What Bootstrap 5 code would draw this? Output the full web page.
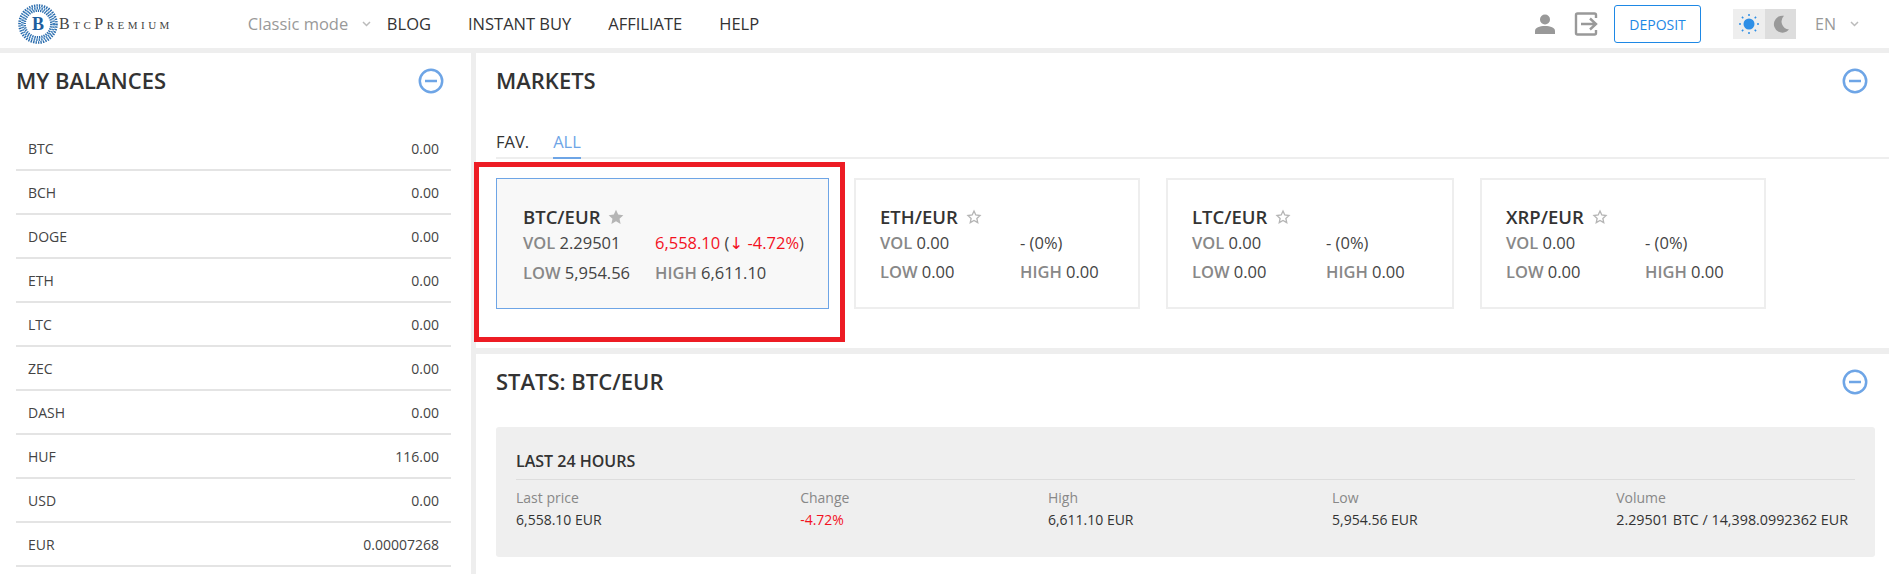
<!DOCTYPE html>
<html lang="en">
<head>
    <meta charset="UTF-8">
    <meta name="viewport" content="width=device-width, initial-scale=1.0">
    <title>BtcPremium</title>
    <link href="https://cdn.jsdelivr.net/npm/bootstrap@5.3.0/dist/css/bootstrap.min.css" rel="stylesheet">
    <style>
        html, body { height: 574px; overflow: hidden; }
        body { font-family: "Open Sans", "Liberation Sans", sans-serif; background: #eee; color: #333; font-size: 14px; }
        .navbar.top-bar { height: 48px; padding: 0 0 0 18px; background: #fff; }
        .logo-name { font-family: "Liberation Serif", serif; font-size: 16px; letter-spacing: 3.5px; color: #444; font-variant: small-caps; margin-left: 1px; }
        .mode-pick { width: 139px; margin-left: 75px; color: #999; font-size: 16.5px; }
        .top-links { gap: 37px; }
        .top-bar .top-links .nav-link { color: #333; font-size: 16.5px; text-decoration: none; padding: 0; }
        .caret-mark { flex: none; }
        .right-tools { margin-right: 30px; }
        .user-mark { margin-right: 18px; }
        .deposit-btn { width: 87px; height: 38px; padding: 0; margin: 0 32px 0 16px; font-size: 14px; font-weight: 500; color: #1e88e5; border: 1px solid #1e88e5; border-radius: 3px; background: #fff; }
        .theme-cell { width: 32px; height: 30px; background: #eee; }
        .theme-cell.is-dark { background: #ddd; width: 31px; }
        .lang-pick { color: #999; font-size: 16px; margin-left: 19px; gap: 14px; }
        .page-body { margin-top: 5px; gap: 5px; height: 521px; }
        .side-panel { width: 471px; flex: none; background: #fff; padding: 0 20px 0 16px; }
        .main-col { gap: 6px; min-width: 0; }
        .panel-head { height: 55px; }
        .side-panel .panel-head { padding-right: 7px; }
        .markets-panel .panel-head { padding-right: 1px; }
        .stats-panel .panel-head { padding-right: 7px; }
        .panel-title { font-size: 22px; font-weight: 600; margin: 0; color: #333; }
        .balance-list { margin-top: 19px; border-radius: 0; }
        .balance-list .list-group-item { height: 44px; padding: 0 12px; font-size: 14px; color: #444; border-color: #e4e4e4; border-width: 0 0 2px; }
        .balance-list .list-group-item:last-child { border-bottom-width: 2px; }
        .markets-panel { height: 295px; background: #fff; padding: 0 20px; }
        .market-tabs { height: 52px; margin-top: -1px; border-bottom: 2px solid #eee; margin-right: -20px; align-items: flex-end; gap: 24px; font-size: 16.5px; }
        .market-tabs span { height: 32px; line-height: 30px; margin-bottom: -2px; }
        .tab-on { color: #6ea5e6; border-bottom: 2px solid #6ea5e6; }
        .pair-row { margin-top: 19px; gap: 26px; }
        .pair-box { position: relative; width: 286px; height: 131px; padding: 25px 0 0 24px; border: 2px solid #eee; font-size: 16.5px; }
        .pair-box.is-wide { width: 288px; }
        .pair-box.is-on { width: 333px; padding: 26px 0 0 26px; background: #f8f8f8; border: 1px solid #6ea5e6; margin-right: -1px; }
        .pair-name { font-size: 18.5px; font-weight: 600; line-height: 24px; gap: 8px; color: #333; }
        .pair-stats { display: grid; row-gap: 5px; line-height: 24px; margin-top: 2px; color: #444; }
        .cols-a { grid-template-columns: 132px auto; }
        .cols-b { grid-template-columns: 140px auto; }
        .cols-c { grid-template-columns: 134px auto; }
        .cols-d { grid-template-columns: 139px auto; }
        .dim-word { color: #888; font-weight: 600; }
        .down-val { color: #f3121f; font-weight: 500; }
        .arrow-mark { font-family: "DejaVu Sans", sans-serif; font-weight: 400; }
        .mark-box { position: absolute; left: -23px; top: -17px; width: 371px; height: 180px; border: 5px solid #ed1c24; pointer-events: none; }
        .stats-panel { flex: 1; background: #fff; padding: 0 14px 0 20px; }
        .stats-box { margin-top: 18px; height: 130px; background: #efefef; border-radius: 3px; padding: 22px 20px 0; }
        .stats-box h3 { font-size: 16px; font-weight: 600; line-height: 24px; margin: 0; padding-bottom: 6px; border-bottom: 1px solid #ddd; color: #333; }
        .stat-cols { margin-top: 7px; padding-right: 7px; }
        .stat-label { font-size: 14px; color: #888; line-height: 22px; }
        .stat-val { font-size: 14px; color: #333; font-weight: 500; line-height: 22px; }
        .stat-val.down-val { color: #f3121f; }
        .stat-val.is-long { font-size: 14.3px; }
    </style>
</head>
<body>
    <nav class="navbar navbar-expand top-bar">
        <div class="d-flex align-items-center">
            <svg width="40" height="40" viewBox="0 0 40 40">
                <circle cx="20" cy="20" r="18.5" fill="none" stroke="#2a6cad" stroke-width="2.6" stroke-dasharray="1.4 1.1"/>
                <circle cx="20" cy="20" r="15.8" fill="none" stroke="#3f80bd" stroke-width="2.6" stroke-dasharray="1.5 1"/>
                <circle cx="20" cy="20" r="13.3" fill="none" stroke="#2a6cad" stroke-width="2.4" stroke-dasharray="1.3 1"/>
                <circle cx="20" cy="20" r="11" fill="#fff"/>
                <text x="20" y="26" text-anchor="middle" font-family="Liberation Serif, serif" font-size="18" font-weight="700" fill="#1d5e9e">B</text>
            </svg>
            <span class="logo-name">BtcPremium</span>
        </div>
        <div class="mode-pick d-flex align-items-center justify-content-between pe-3">
            <span>Classic mode</span>
            <svg class="caret-mark" width="9" height="6" viewBox="0 0 9 6"><path d="M1 1l3.500 3.500L8 1" fill="none" stroke="#bbb" stroke-width="1.500"/></svg>
        </div>
        <div class="navbar-nav top-links">
            <a class="nav-link" href="#">BLOG</a>
            <a class="nav-link" href="#">INSTANT BUY</a>
            <a class="nav-link" href="#">AFFILIATE</a>
            <a class="nav-link" href="#">HELP</a>
        </div>
        <div class="ms-auto d-flex align-items-center right-tools">
            <svg class="user-mark" width="22" height="22" viewBox="0 0 22 22" fill="#999">
                <circle cx="11" cy="6.500" r="5"/>
                <path d="M1 21v-3c0-3.500 4.500-5 10-5s10 1.500 10 5v3z"/>
            </svg>
            <svg width="24" height="24" viewBox="0 0 24 24" fill="none" stroke="#999" stroke-width="2.400">
                <path d="M22 6V3a1.500 1.500 0 0 0-1.500-1.500h-17A1.500 1.500 0 0 0 2 3v18a1.500 1.500 0 0 0 1.500 1.500h17A1.500 1.500 0 0 0 22 21v-3"/>
                <path d="M7 12h15M16 6.500l6 5.500-6 5.500"/>
            </svg>
            <button type="button" class="btn deposit-btn">DEPOSIT</button>
            <div class="d-flex">
                <div class="theme-cell d-flex align-items-center justify-content-center">
                    <svg width="22" height="22" viewBox="0 0 22 22" fill="#2f8fe6">
                        <circle cx="11" cy="11" r="5.500"/>
                        <g stroke="#2f8fe6" stroke-width="1.500">
                            <path d="M11 1v2M11 19v2M1 11h2M19 11h2M3.900 3.900l1.400 1.400M16.700 16.700l1.400 1.400M3.900 18.100l1.400-1.400M16.700 5.300l1.400-1.400"/>
                        </g>
                    </svg>
                </div>
                <div class="theme-cell is-dark d-flex align-items-center justify-content-center">
                    <svg width="18" height="18" viewBox="0 0 18 18" fill="#999"><path d="M12 .8A8.500 8.500 0 1 0 17 14.500 8 8 0 0 1 12 .8z"/></svg>
                </div>
            </div>
            <div class="lang-pick d-flex align-items-center">
                <span>EN</span>
                <svg width="9" height="6" viewBox="0 0 9 6"><path d="M1 1l3.500 3.500L8 1" fill="none" stroke="#bbb" stroke-width="1.500"/></svg>
            </div>
        </div>
    </nav>

    <div class="d-flex page-body">
        <aside class="side-panel">
            <div class="panel-head d-flex justify-content-between align-items-center">
                <h2 class="panel-title">MY BALANCES</h2>
                <svg width="26" height="26" viewBox="0 0 26 26" fill="none" stroke="#6ea5e6" stroke-width="2.500"><circle cx="13" cy="13" r="11.200"/><path d="M7 13h12"/></svg>
            </div>
            <ul class="list-group list-group-flush balance-list" id="balances"></ul>
        </aside>

        <main class="flex-grow-1 d-flex flex-column main-col">
            <section class="markets-panel">
                <div class="panel-head d-flex justify-content-between align-items-center">
                    <h2 class="panel-title">MARKETS</h2>
                    <svg width="26" height="26" viewBox="0 0 26 26" fill="none" stroke="#6ea5e6" stroke-width="2.500"><circle cx="13" cy="13" r="11.200"/><path d="M7 13h12"/></svg>
                </div>
                <div class="d-flex market-tabs">
                    <span>FAV.</span>
                    <span class="tab-on">ALL</span>
                </div>
                <div class="d-flex pair-row">
                    <div class="pair-box is-on">
                        <div class="pair-name d-flex align-items-center">BTC/EUR
                            <svg width="16" height="16" viewBox="0 0 24 24" fill="#b5b5b5"><path d="M12 1l3.300 7.300 7.700.9-5.700 5.300 1.600 7.900-6.900-4-6.900 4 1.600-7.900L1 9.200l7.700-.9z"/></svg>
                        </div>
                        <div class="pair-stats cols-a">
                            <div><span class="dim-word">VOL</span> 2.29501</div>
                            <div class="text-nowrap"><span class="down-val">6,558.10</span> (<span class="down-val"><span class="arrow-mark">↓</span> -4.72%</span>)</div>
                            <div><span class="dim-word">LOW</span> 5,954.56</div>
                            <div><span class="dim-word">HIGH</span> 6,611.10</div>
                        </div>
                        <span class="mark-box"></span>
                    </div>
                    <div class="pair-box">
                        <div class="pair-name d-flex align-items-center">ETH/EUR
                            <svg width="16" height="16" viewBox="0 0 24 24" fill="none" stroke="#b5b5b5" stroke-width="2"><path d="M12 3l2.700 6 6.300.8-4.700 4.300 1.300 6.400-5.600-3.300-5.600 3.300 1.300-6.400L3 9.800 9.300 9z"/></svg>
                        </div>
                        <div class="pair-stats cols-b">
                            <div><span class="dim-word">VOL</span> 0.00</div><div>- (0%)</div>
                            <div><span class="dim-word">LOW</span> 0.00</div><div><span class="dim-word">HIGH</span> 0.00</div>
                        </div>
                    </div>
                    <div class="pair-box is-wide">
                        <div class="pair-name d-flex align-items-center">LTC/EUR
                            <svg width="16" height="16" viewBox="0 0 24 24" fill="none" stroke="#b5b5b5" stroke-width="2"><path d="M12 3l2.700 6 6.300.8-4.700 4.300 1.300 6.400-5.600-3.300-5.600 3.300 1.300-6.400L3 9.800 9.300 9z"/></svg>
                        </div>
                        <div class="pair-stats cols-c">
                            <div><span class="dim-word">VOL</span> 0.00</div><div>- (0%)</div>
                            <div><span class="dim-word">LOW</span> 0.00</div><div><span class="dim-word">HIGH</span> 0.00</div>
                        </div>
                    </div>
                    <div class="pair-box">
                        <div class="pair-name d-flex align-items-center">XRP/EUR
                            <svg width="16" height="16" viewBox="0 0 24 24" fill="none" stroke="#b5b5b5" stroke-width="2"><path d="M12 3l2.700 6 6.300.8-4.700 4.300 1.300 6.400-5.600-3.300-5.600 3.300 1.300-6.400L3 9.800 9.300 9z"/></svg>
                        </div>
                        <div class="pair-stats cols-d">
                            <div><span class="dim-word">VOL</span> 0.00</div><div>- (0%)</div>
                            <div><span class="dim-word">LOW</span> 0.00</div><div><span class="dim-word">HIGH</span> 0.00</div>
                        </div>
                    </div>
                </div>
            </section>

            <section class="stats-panel">
                <div class="panel-head d-flex justify-content-between align-items-center">
                    <h2 class="panel-title">STATS: BTC/EUR</h2>
                    <svg width="26" height="26" viewBox="0 0 26 26" fill="none" stroke="#6ea5e6" stroke-width="2.500"><circle cx="13" cy="13" r="11.200"/><path d="M7 13h12"/></svg>
                </div>
                <div class="stats-box">
                    <h3>LAST 24 HOURS</h3>
                    <div class="d-flex justify-content-between stat-cols">
                        <div><div class="stat-label">Last price</div><div class="stat-val">6,558.10 EUR</div></div>
                        <div><div class="stat-label">Change</div><div class="stat-val down-val">-4.72%</div></div>
                        <div><div class="stat-label">High</div><div class="stat-val">6,611.10 EUR</div></div>
                        <div><div class="stat-label">Low</div><div class="stat-val">5,954.56 EUR</div></div>
                        <div><div class="stat-label">Volume</div><div class="stat-val is-long">2.29501 BTC / 14,398.0992362 EUR</div></div>
                    </div>
                </div>
            </section>
        </main>
    </div>

    <script>
        const balances = [['BTC', '0.00'], ['BCH', '0.00'], ['DOGE', '0.00'], ['ETH', '0.00'], ['LTC', '0.00'], ['ZEC', '0.00'], ['DASH', '0.00'], ['HUF', '116.00'], ['USD', '0.00'], ['EUR', '0.00007268']];
        const list = document.getElementById('balances');
        balances.forEach(b => {
            list.insertAdjacentHTML('beforeend', `<li class="list-group-item d-flex justify-content-between align-items-center"><span>${b[0]}</span><span>${b[1]}</span></li>`);
        });
    </script>
    <script src="https://cdn.jsdelivr.net/npm/bootstrap@5.3.0/dist/js/bootstrap.bundle.min.js"></script>
</body>
</html>
